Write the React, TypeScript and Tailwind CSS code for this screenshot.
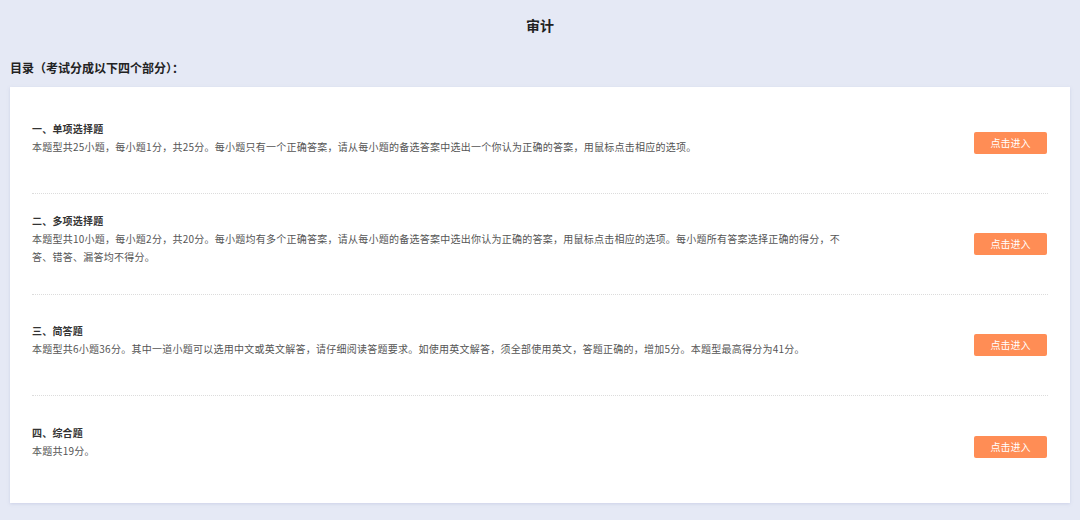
import React from 'react'

const sections = [
    {
        title: '一、单项选择题',
        desc: '本题型共25小题，每小题1分，共25分。每小题只有一个正确答案，请从每小题的备选答案中选出一个你认为正确的答案，用鼠标点击相应的选项。'
    },
    {
        title: '二、多项选择题',
        desc: '本题型共10小题，每小题2分，共20分。每小题均有多个正确答案，请从每小题的备选答案中选出你认为正确的答案，用鼠标点击相应的选项。每小题所有答案选择正确的得分，不答、错答、漏答均不得分。'
    },
    {
        title: '三、简答题',
        desc: '本题型共6小题36分。其中一道小题可以选用中文或英文解答，请仔细阅读答题要求。如使用英文解答，须全部使用英文，答题正确的，增加5分。本题型最高得分为41分。'
    },
    {
        title: '四、综合题',
        desc: '本题共19分。'
    }
]

const App = () => {
    return (
        <div
            className="w-[1080px] h-[520px] bg-[#e5e9f5] overflow-hidden"
            style={{ fontFamily: '"Noto Sans CJK SC", "Noto Sans", sans-serif' }}
        >
            <div className="h-[50px] flex items-center justify-center text-[14px] font-bold text-[#222]">
                审计
            </div>
            <div className="px-[10px] h-[36px] flex items-center text-[12px] font-bold text-[#222]">
                目录（考试分成以下四个部分）：
            </div>
            <div className="mx-[10px] mt-[1px] bg-white shadow-[0_1px_3px_rgba(160,170,210,0.35)] px-[22px] pt-[6px] pb-[6px]">
                {sections.map((s, i) => (
                    <div
                        key={i}
                        className={`h-[101px] flex items-center justify-between ${i < sections.length - 1 ? 'border-b border-dotted border-[#dcdcdc]' : ''}`}
                    >
                        <div className="max-w-[815px] pb-[10px]">
                            <div className="text-[10px] leading-[18px] font-bold text-[#333] tracking-[0.2px]">{s.title}</div>
                            <div className="text-[10px] leading-[18px] text-[#555] tracking-[0.25px]">{s.desc}</div>
                        </div>
                        <button className="w-[73px] h-[22px] mr-[1px] rounded-[2px] bg-[#ff8d55] text-white text-[10px] leading-none">
                            点击进入
                        </button>
                    </div>
                ))}
            </div>
        </div>
    )
}

export default App
